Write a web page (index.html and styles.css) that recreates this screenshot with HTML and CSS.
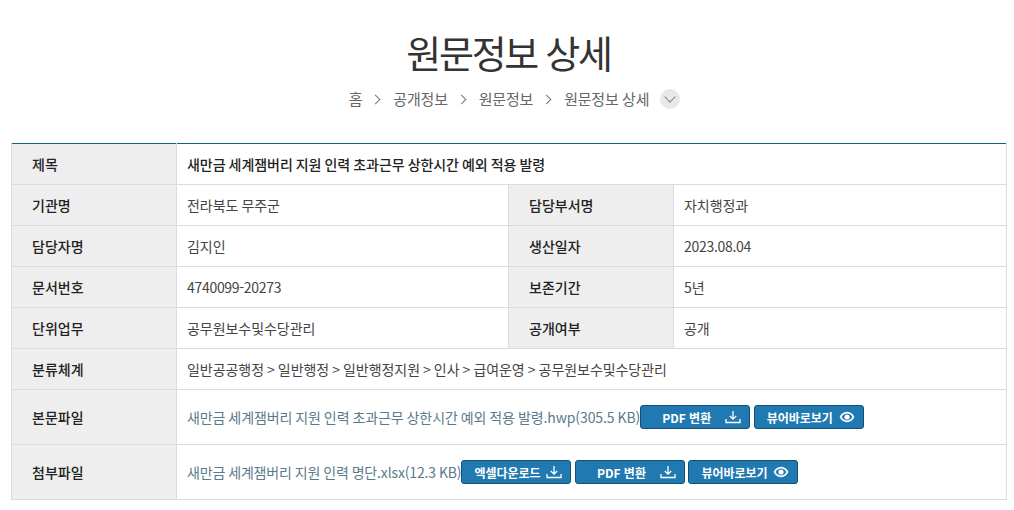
FILE: index.html
```html
<!DOCTYPE html>
<html lang="ko">
<head>
<meta charset="utf-8">
<title>원문정보 상세</title>
<link rel="stylesheet" href="styles.css">
</head>
<body>
<svg class="sprite" width="0" height="0" aria-hidden="true">
  <symbol id="dl" viewBox="0 0 16 14"><path d="M8 1v8M4.8 6 8 9.2 11.200 6M1 9v3.500h14V9" fill="none" stroke="#fff" stroke-width="1.300"/></symbol>
  <symbol id="eye" viewBox="0 0 16 12"><path fill-rule="evenodd" fill="#fff" d="M8 .8C4.700.8 1.900 2.900.6 6c1.300 3.100 4.100 5.200 7.400 5.200s6.100-2.100 7.400-5.200C14.100 2.900 11.300.8 8 .8ZM8 2.400c2.300 0 4.300 1.400 5.400 3.600-1.100 2.200-3.100 3.600-5.400 3.600S3.700 8.200 2.600 6C3.700 3.800 5.700 2.400 8 2.400Z"/><circle cx="8" cy="6" r="2.600" fill="#fff"/></symbol>
</svg>
<header class="head">
  <h1 class="title">원문정보 상세</h1>
  <nav class="crumbs">
    <span>홈</span><i class="sep"></i>
    <span>공개정보</span><i class="sep"></i>
    <span>원문정보</span><i class="sep"></i>
    <span>원문정보 상세</span>
    <b class="more"><i class="chev"></i></b>
  </nav>
</header>
<main class="wrap">
<table class="info">
  <colgroup><col class="c1"><col class="c2"><col class="c3"><col class="c4"></colgroup>
  <tr><th>제목</th><td colspan="3" class="strong">새만금 세계잼버리 지원 인력 초과근무 상한시간 예외 적용 발령</td></tr>
  <tr><th>기관명</th><td>전라북도 무주군</td><th>담당부서명</th><td>자치행정과</td></tr>
  <tr><th>담당자명</th><td>김지인</td><th>생산일자</th><td class="num">2023.08.04</td></tr>
  <tr><th>문서번호</th><td class="num">4740099-20273</td><th>보존기간</th><td>5년</td></tr>
  <tr><th>단위업무</th><td>공무원보수및수당관리</td><th>공개여부</th><td>공개</td></tr>
  <tr><th>분류체계</th><td colspan="3">일반공공행정 &gt; 일반행정 &gt; 일반행정지원 &gt; 인사 &gt; 급여운영 &gt; 공무원보수및수당관리</td></tr>
  <tr class="file"><th>본문파일</th><td colspan="3"><div class="files">
    <a class="flink">새만금 세계잼버리 지원 인력 초과근무 상한시간 예외 적용 발령.hwp(305.5 KB)</a>
    <a class="btn b110"><span>PDF 변환</span><svg class="dl"><use href="#dl"/></svg></a>
    <a class="btn b110 view"><span>뷰어바로보기</span><svg class="ey"><use href="#eye"/></svg></a>
  </div></td></tr>
  <tr class="file"><th>첨부파일</th><td colspan="3"><div class="files">
    <a class="flink tight">새만금 세계잼버리 지원 인력 명단.xlsx(12.3 KB)</a>
    <a class="btn b110 excel"><span>엑셀다운로드</span><svg class="dl"><use href="#dl"/></svg></a>
    <a class="btn b110"><span>PDF 변환</span><svg class="dl"><use href="#dl"/></svg></a>
    <a class="btn b110 view"><span>뷰어바로보기</span><svg class="ey"><use href="#eye"/></svg></a>
  </div></td></tr>
</table>
</main>
</body>
</html>
```
FILE: styles.css
```css
* { box-sizing: border-box; }
html, body { margin: 0; padding: 0; background: #fff; }
body { font-family: "Noto Sans CJK KR", "Noto Sans", sans-serif; color: #333; overflow: hidden; }
.sprite { position: absolute; }
.head { height: 143px; padding: 25px 0 0 3px; text-align: center; }
.title { margin: 0; font-size: 38px; line-height: 54px; font-weight: 400; color: #333; letter-spacing: -2.300px; }
.crumbs { display: flex; justify-content: center; align-items: center; height: 22px; margin-top: 9px; font-size: 15px; letter-spacing: -0.2px; word-spacing: -0.5px; color: #666; padding-left: 12px; }
.crumbs span { padding-bottom: 2px; }
.sep { width: 7px; height: 7px; margin: 0 14px 0 10px; border-top: 1.300px solid #777; border-right: 1.300px solid #777; transform: rotate(45deg); }
.more { display: flex; align-items: center; justify-content: center; width: 20px; height: 20px; margin-left: 11px; border-radius: 50%; background: #e8e8ea; }
.chev { width: 8px; height: 8px; margin-top: -4px; border-right: 1.500px solid #888; border-bottom: 1.500px solid #888; transform: rotate(45deg); }
.wrap { padding-left: 11px; }
.info { width: 995px; table-layout: fixed; border-collapse: collapse; border-top: 1px solid #0f6673; font-size: 14px; }
.c1 { width: 165px; } .c2 { width: 332px; } .c3 { width: 165px; } .c4 { width: 333px; }
.info tr { height: 41px; }
.info tr.file { height: 55px; }
.info th, .info td { border: 1px solid #dcdcdc; padding: 0 10px; font-weight: 400; text-align: left; }
.info th { background: #eee; padding-left: 20px; color: #222; font-weight: 500; }
.info td { color: #444; letter-spacing: -0.05px; word-spacing: -0.8px; }
.info td.num { letter-spacing: -0.3px; }
.info tr:first-child th, .info tr:first-child td { border-top: 0; }
.info td.strong { font-weight: 500; color: #222; }
.files { display: flex; align-items: center; gap: 3.500px; }
.flink { color: #5b7a8c; white-space: nowrap; margin-right: -3.500px; letter-spacing: -0.1px; }
.flink.tight { letter-spacing: -0.15px; }
.btn { display: flex; align-items: center; justify-content: space-between; height: 24px; border: 1px solid #15507a; border-radius: 3px; background: #2079b0; color: #fff; font-size: 12px; font-weight: 700; white-space: nowrap; letter-spacing: 0; word-spacing: 0; }
.b110 { width: 110px; padding: 0 8px 0 21px; }
.excel { padding-left: 12px; }
.view { padding: 0 8px 0 12px; }
.dl { width: 16px; height: 14px; }
.ey { width: 16px; height: 12px; }
```
